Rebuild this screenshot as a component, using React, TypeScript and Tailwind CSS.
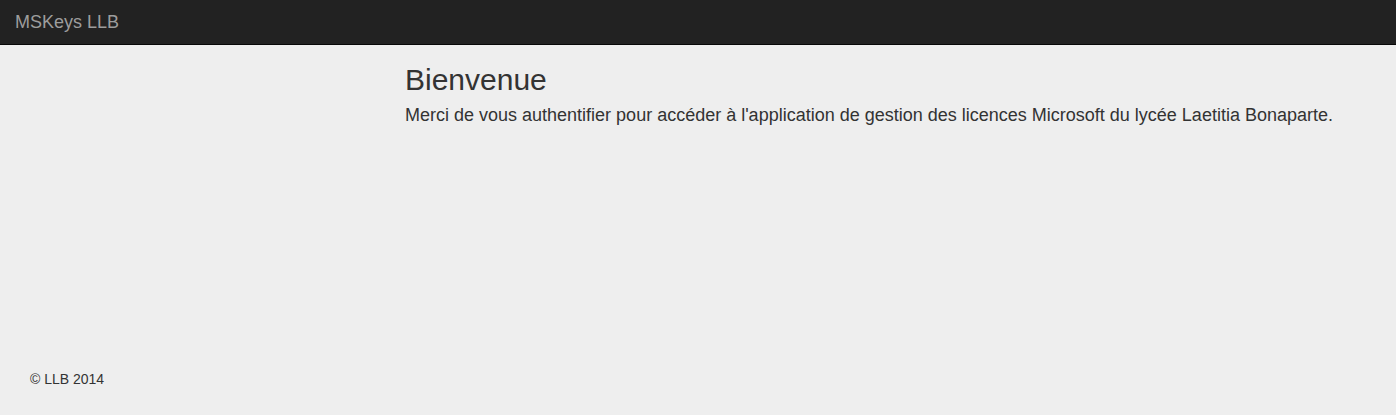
import React from "react";

const App = () => {
  return (
    <div
      className="flex h-[415px] flex-col bg-[#eeeeee] text-[#333333]"
      style={{ fontFamily: '"Liberation Sans", Arial, sans-serif' }}
    >
      <nav className="h-[45px] shrink-0 border-b border-[#080808] bg-[#222222]">
        <div className="flex h-full items-center px-[15px]">
          <span className="text-[18px] leading-[20px] text-[#9d9d9d]">MSKeys LLB</span>
        </div>
      </nav>

      <main className="flex flex-1">
        <div className="w-[390px] shrink-0" />
        <div className="px-[15px] pt-[18px]">
          <h1 className="text-[30px] leading-[33px] font-normal">Bienvenue</h1>
          <p className="mt-[7px] text-[18px] leading-[25px]">
            Merci de vous authentifier pour accéder à l'application de gestion des licences Microsoft du lycée Laetitia Bonaparte.
          </p>
        </div>
      </main>

      <footer className="px-[30px] pb-[26px]">
        <p className="text-[14px] leading-[20px]">© LLB 2014</p>
      </footer>
    </div>
  );
};

export default App;
